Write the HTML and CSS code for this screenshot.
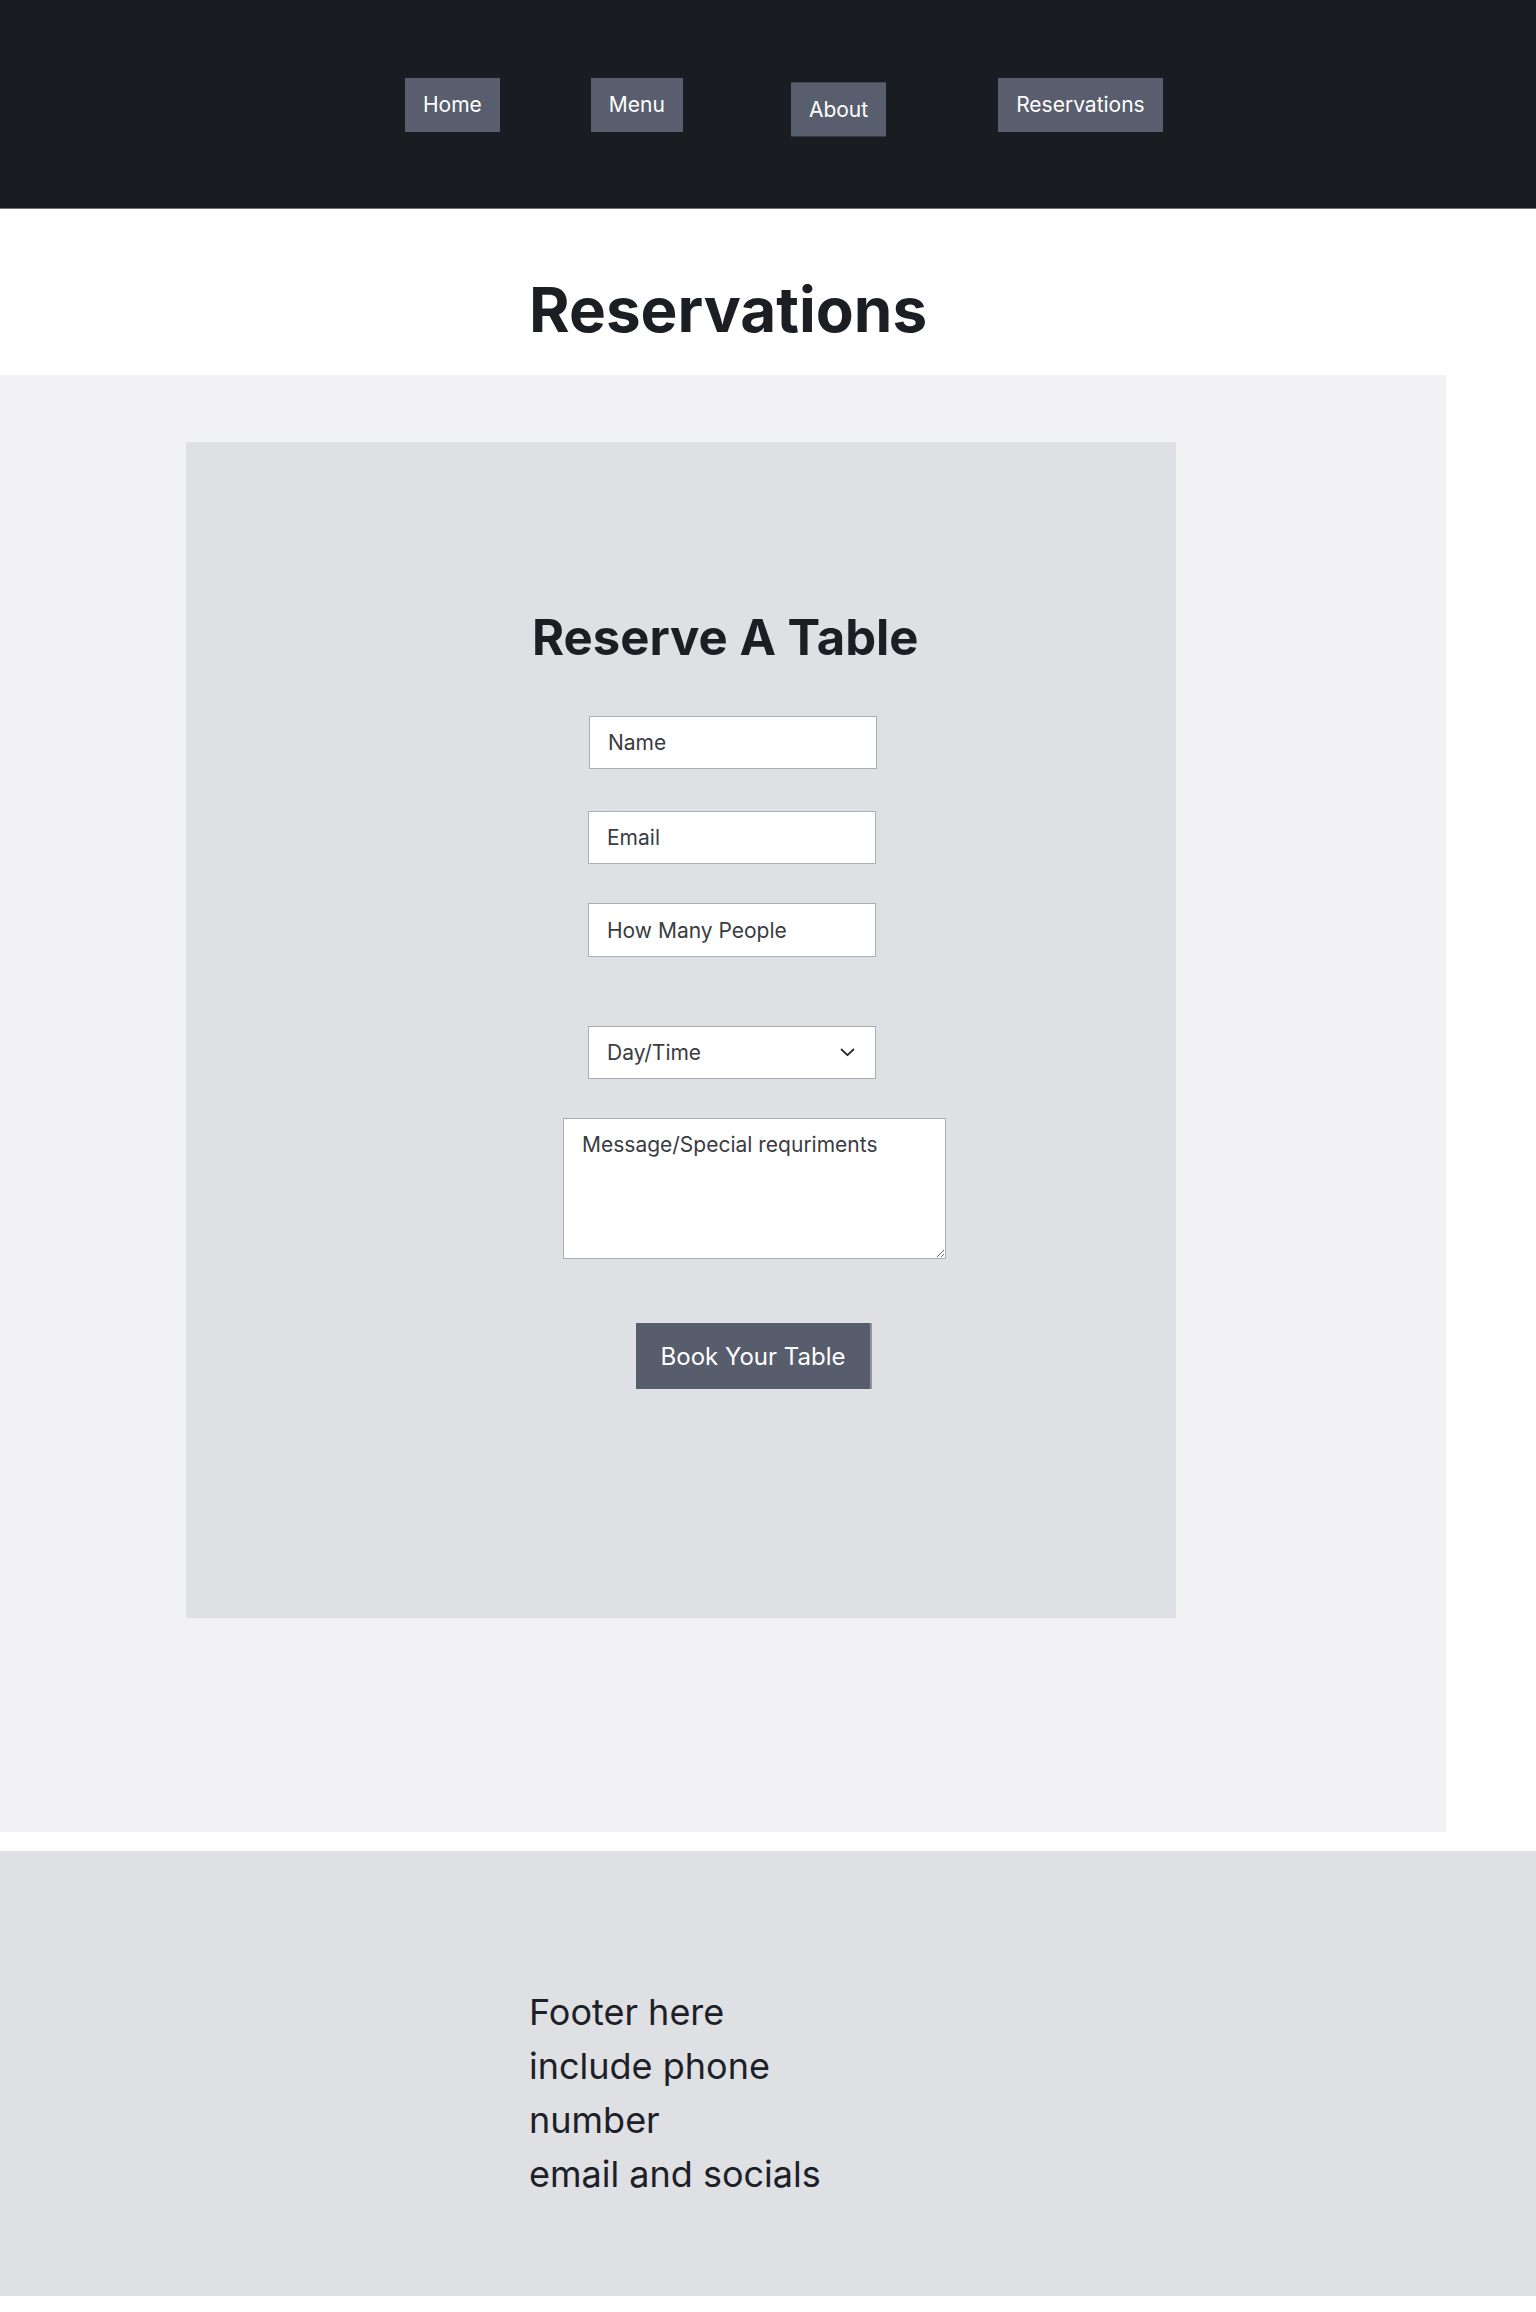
FILE: index.html
```html
<!DOCTYPE html>
<html lang="en">
<head>
<meta charset="utf-8">
<title>Reservations</title>
<link rel="stylesheet" href="styles.css">
</head>
<body>
<header class="site-nav">
  <ul class="nav-list">
    <li><a class="nav-btn nav-home" href="#">Home</a></li>
    <li><a class="nav-btn nav-menu" href="#">Menu</a></li>
    <li><a class="nav-btn nav-about" href="#">About</a></li>
    <li><a class="nav-btn nav-res" href="#">Reservations</a></li>
  </ul>
</header>

<section class="page-title">
  <div class="narrow">
    <h1>Reservations</h1>
  </div>
</section>

<main class="res-section">
  <div class="res-card">
    <h2 class="card-title">Reserve A Table</h2>
    <form class="res-form">
      <input class="field f-name" type="text" placeholder="Name">
      <input class="field f-email" type="email" placeholder="Email">
      <input class="field f-people" type="text" placeholder="How Many People">
      <div class="select-wrap">
        <select class="field f-select">
          <option>Day/Time</option>
        </select>
        <svg class="chev" width="15" height="9" viewBox="0 0 15 9"><path d="M1.5 1.5 L7.5 7.2 L13.5 1.5" fill="none" stroke="#24272d" stroke-width="1.8" stroke-linecap="round" stroke-linejoin="round"/></svg>
      </div>
      <textarea class="field f-msg" placeholder="Message/Special requriments"></textarea>
      <button class="book-btn" type="button">Book Your Table</button>
    </form>
  </div>
</main>

<footer class="site-footer">
  <div class="narrow">
    <p class="footer-text">Footer here include phone number<br>email and socials</p>
  </div>
</footer>
</body>
</html>
```

FILE: styles.css
```css
* { box-sizing: border-box; }

html, body {
  margin: 0;
  padding: 0;
  background: #ffffff;
  font-family: Inter, "Noto Sans", "Liberation Sans", sans-serif;
  color: #1b1e23;
}

.site-nav {
  background: #191c21;
  height: 209px;
  border-bottom: 1px solid #6f7277;
}

.nav-list {
  list-style: none;
  margin: 0;
  padding: 78px 0 0 405px;
  display: flex;
  align-items: flex-start;
}

.nav-list li:nth-child(2) { margin-left: 91px; }
.nav-list li:nth-child(3) { margin-left: 108px; }
.nav-list li:nth-child(4) { margin-left: 112px; }

.nav-btn {
  display: block;
  background: #585e6d;
  color: #ffffff;
  text-decoration: none;
  font-size: 21px;
  line-height: 26px;
  padding: 14px 18px;
}

.nav-about {
  margin-top: 4px;
  border-top: 1px solid #434856;
  border-bottom: 1px solid #363a44;
  padding: 14px 18px 13px;
}

.narrow {
  width: 478px;
  margin: 0 auto;
}

.page-title {
  padding: 63px 0 27px;
}

.page-title h1 {
  margin: 0;
  font-size: 62px;
  line-height: 76px;
  font-weight: 700;
  letter-spacing: 0;
  color: #1b1e23;
}

.res-section {
  display: block;
  width: 1446px;
  background: #f2f2f4;
  padding: 67px 0 214px 186px;
}

.res-card {
  width: 990px;
  height: 1176px;
  background: #dee0e4;
  padding-top: 166px;
}

.card-title {
  margin: 0 0 48px 346px;
  font-size: 49px;
  line-height: 60px;
  font-weight: 700;
  color: #1b1e23;
}

.res-form {
  display: flex;
  flex-direction: column;
  align-items: flex-start;
}

.field {
  display: block;
  width: 288px;
  height: 53px;
  background: #ffffff;
  border: 1px solid #a9adb6;
  border-radius: 0;
  padding: 0 18px;
  font-family: Inter, "Noto Sans", "Liberation Sans", sans-serif;
  font-size: 21px;
  font-weight: 400;
  color: #3a3c42;
  outline: none;
}

.field::placeholder { color: #3a3c42; opacity: 1; }

.f-name { margin-left: 403px; }
.f-email { margin-left: 402px; margin-top: 42px; }
.f-people { margin-left: 402px; margin-top: 39px; height: 54px; }

.select-wrap {
  position: relative;
  margin-left: 402px;
  margin-top: 69px;
}

.f-select {
  appearance: none;
  -webkit-appearance: none;
}

.chev {
  position: absolute;
  right: 21px;
  top: 22px;
}

.f-msg {
  margin-left: 377px;
  margin-top: 39px;
  width: 383px;
  height: 141px;
  padding: 13px 18px;
  line-height: 25px;
  resize: both;
}

.book-btn {
  margin-left: 450px;
  margin-top: 64px;
  width: 236px;
  height: 66px;
  background: #575d6c;
  color: #ffffff;
  border: none;
  border-right: 2px solid #8d93a3;
  font-family: Inter, "Noto Sans", "Liberation Sans", sans-serif;
  font-size: 24px;
  padding: 0;
  cursor: pointer;
}

.site-footer {
  margin-top: 19px;
  background: #dee0e4;
  padding: 134px 0 95px;
}

.footer-text {
  margin: 0;
  width: 300px;
  font-size: 36px;
  line-height: 54px;
  font-weight: 400;
  color: #1d2027;
}
```
